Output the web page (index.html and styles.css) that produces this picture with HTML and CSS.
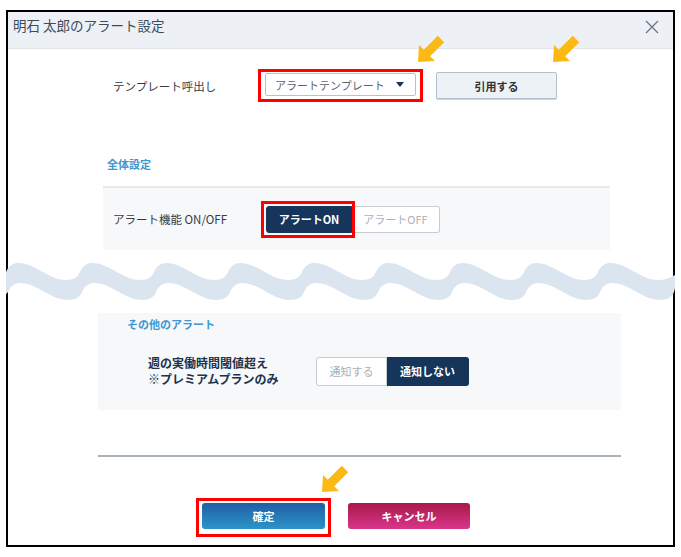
FILE: index.html
```html
<!DOCTYPE html>
<html lang="ja">
<head>
    <meta charset="UTF-8">
    <meta name="viewport" content="width=device-width, initial-scale=1.0">
    <title>明石 太郎のアラート設定</title>
    <link rel="stylesheet" href="styles.css">
</head>
<body>
    <div class="dialog">
        <div class="dialog-header">
            <span class="dialog-title">明石 太郎のアラート設定</span>
            <svg class="close" width="14" height="14" viewBox="0 0 14 14">
                <path d="M1 1 L13 13 M13 1 L1 13" stroke="#6d7b88" stroke-width="1.4" fill="none"/>
            </svg>
        </div>

        <div class="template-row">
            <span class="row-label">テンプレート呼出し</span>
            <div class="marker marker-select">
                <div class="select">アラートテンプレート<span class="caret"></span></div>
            </div>
            <button class="btn-quote">引用する</button>
        </div>

        <h2 class="section-title section-all">全体設定</h2>
        <div class="panel panel-all">
            <span class="row-label label-wide">アラート機能 ON/OFF</span>
            <button class="toggle toggle-left is-active is-marked">アラートON</button>
            <button class="toggle toggle-right toggle-off">アラートOFF</button>
        </div>

        <div class="panel panel-other">
            <h2 class="section-title">その他のアラート</h2>
            <div class="other-row">
                <div class="other-label">週の実働時間閾値超え<br>※プレミアムプランのみ</div>
                <button class="toggle toggle-left toggle-notify">通知する</button>
                <button class="toggle toggle-right is-active toggle-silent">通知しない</button>
            </div>
        </div>

        <hr class="divider">

        <div class="actions">
            <div class="marker marker-ok">
                <button class="btn-ok">確定</button>
            </div>
            <button class="btn-cancel">キャンセル</button>
        </div>

        <!-- cut mark between the two screenshots -->
        <svg class="wave" width="681" height="46" viewBox="0 0 681 46">
            <path fill="#dbe5f0" d="M6 14
                c2 -5 6 -9 12 -9 c18 0 30 17 48 17 c8 0 12 -3 14 -8
                c2 -5 6 -9 12 -9 c18 0 30 17 48 17 c8 0 12 -3 14 -8
                c2 -5 6 -9 12 -9 c18 0 30 17 48 17 c8 0 12 -3 14 -8
                c2 -5 6 -9 12 -9 c18 0 30 17 48 17 c8 0 12 -3 14 -8
                c2 -5 6 -9 12 -9 c18 0 30 17 48 17 c8 0 12 -3 14 -8
                c2 -5 6 -9 12 -9 c18 0 30 17 48 17 c8 0 12 -3 14 -8
                c2 -5 6 -9 12 -9 c18 0 30 17 48 17 c8 0 12 -3 14 -8
                c2 -5 6 -9 12 -9 c18 0 30 17 48 17 c8 0 12 -3 14 -8
                c2 -5 6 -9 12 -9 c18 0 30 17 48 17 c8 0 14 -2 21 -8
                L674 34
                c-2 5 -6 8 -14 8 c-18 0 -30 -17 -48 -17 c-6 0 -10 4 -12 9
                c-2 5 -6 8 -14 8 c-18 0 -30 -17 -48 -17 c-6 0 -10 4 -12 9
                c-2 5 -6 8 -14 8 c-18 0 -30 -17 -48 -17 c-6 0 -10 4 -12 9
                c-2 5 -6 8 -14 8 c-18 0 -30 -17 -48 -17 c-6 0 -10 4 -12 9
                c-2 5 -6 8 -14 8 c-18 0 -30 -17 -48 -17 c-6 0 -10 4 -12 9
                c-2 5 -6 8 -14 8 c-18 0 -30 -17 -48 -17 c-6 0 -10 4 -12 9
                c-2 5 -6 8 -14 8 c-18 0 -30 -17 -48 -17 c-6 0 -10 4 -12 9
                c-2 5 -6 8 -14 8 c-18 0 -30 -17 -48 -17 c-6 0 -10 4 -12 9
                c-2 5 -6 8 -14 8 c-18 0 -30 -17 -48 -17 c-6 0 -10 4 -12 9
                L1 42 Z"/>
        </svg>

        <svg class="pointer pointer-select" width="28" height="28" viewBox="0 0 28 28">
            <polygon fill="#fdb913" points="1,27 2,10 6.8,14.8 20.8,0.8 27.2,7.2 13.2,21.2 18,26"/>
        </svg>
        <svg class="pointer pointer-quote" width="28" height="28" viewBox="0 0 28 28">
            <polygon fill="#fdb913" points="1,27 2,10 6.8,14.8 20.8,0.8 27.2,7.2 13.2,21.2 18,26"/>
        </svg>
        <svg class="pointer pointer-ok" width="28" height="28" viewBox="0 0 28 28">
            <polygon fill="#fdb913" points="1,27 2,10 6.8,14.8 20.8,0.8 27.2,7.2 13.2,21.2 18,26"/>
        </svg>
    </div>
</body>
</html>
```

FILE: styles.css
```css
body {
    margin: 10px 6px;
    background-color: #fff;
    font-family: "Noto Sans CJK JP", "Noto Sans", sans-serif;
    color: #333c46;
}

button {
    font-family: inherit;
    cursor: pointer;
    padding: 0;
}

.dialog {
    position: relative;
    width: 665px;
    height: 533px;
    border: 2px solid #000;
}

.dialog-header {
    display: flex;
    justify-content: space-between;
    align-items: flex-start;
    padding: 3px 14px 0 5px;
    box-sizing: border-box;
    height: 37px;
    background-color: #edf1f5;
    border-bottom: 1px solid #dfe5ea;
}

.dialog-title {
    font-size: 13.5px;
    line-height: 20px;
    color: #3b4b5b;
}

.close {
    margin-top: 5px;
}

.row-label {
    font-size: 11.5px;
    color: #333c46;
}

/* template row */
.template-row {
    display: flex;
    align-items: center;
    height: 33px;
    margin-top: 20px;
    padding-left: 105px;
}

.template-row .row-label {
    width: 145px;
}

.marker {
    border: 3px solid #f00;
}

.marker-select {
    padding: 1px 4px 3px;
}

.select {
    display: flex;
    align-items: center;
    justify-content: space-between;
    width: 151px;
    height: 23px;
    box-sizing: border-box;
    padding: 0 11px 0 9px;
    border: 1px solid #b7c2cc;
    border-radius: 2px;
    font-size: 11px;
    color: #5b6570;
}

.caret {
    width: 0;
    height: 0;
    border-top: 5px solid #1c3453;
    border-left: 4px solid transparent;
    border-right: 4px solid transparent;
}

.btn-quote {
    width: 121px;
    height: 27px;
    margin-left: 13px;
    background-color: #edf2f6;
    border: 1px solid #b3c0cb;
    border-radius: 2px;
    box-shadow: 0 1px 0 #cbd4dc;
    font-size: 11px;
    font-weight: bold;
    color: #333;
}

/* sections */
.section-title {
    margin: 0;
    font-size: 11px;
    line-height: 14px;
    font-weight: bold;
    color: #3e97d1;
}

.section-all {
    margin: 55px 0 15px 99px;
}

.panel {
    background-color: #f6f8fa;
}

.panel-all {
    display: flex;
    align-items: center;
    width: 507px;
    height: 64px;
    box-sizing: border-box;
    margin-left: 95px;
    padding-left: 10px;
    border-top: 2px solid #e6ebf0;
}

.label-wide {
    width: 153px;
}

.toggle {
    height: 27px;
    font-size: 11px;
    border: 1px solid #c6ccd2;
    background-color: #fff;
    color: #a9b0b7;
}

.toggle-left {
    border-radius: 3px 0 0 3px;
}

.toggle-right {
    border-radius: 0 3px 3px 0;
    border-left: none;
}

.toggle.is-active {
    background-color: #15355a;
    border-color: #15355a;
    color: #fff;
    font-weight: bold;
}

.is-marked {
    position: relative;
    z-index: 1;
}

.is-marked::after {
    content: "";
    position: absolute;
    inset: -6px -4px -6px -6px;
    border: 3px solid #f00;
}

.panel-all .toggle-left {
    width: 86px;
}

.panel-all .toggle-off {
    width: 88px;
}

.panel-other {
    width: 523px;
    height: 97px;
    box-sizing: border-box;
    margin: 63px 0 0 90px;
    padding: 4px 0 0 29px;
}

.other-row {
    display: flex;
    align-items: center;
    margin: 24px 0 0 21px;
}

.other-label {
    width: 168px;
    font-size: 12px;
    line-height: 16px;
    font-weight: bold;
    color: #22324a;
}

.toggle-notify {
    width: 71px;
    height: 29px;
}

.toggle-silent {
    width: 82px;
    height: 29px;
}

.divider {
    width: 523px;
    height: 2px;
    margin: 45px 0 0 90px;
    border: none;
    background-color: #a8b3bc;
}

/* footer buttons */
.actions {
    display: flex;
    align-items: flex-start;
    margin-top: 41px;
    padding-left: 188px;
}

.marker-ok {
    padding: 2px 3px 5px;
}

.btn-ok,
.btn-cancel {
    height: 26px;
    border: none;
    border-radius: 3px;
    font-size: 11px;
    font-weight: bold;
    color: #fff;
}

.btn-ok {
    display: block;
    width: 123px;
    background: linear-gradient(#1f5fa4, #2c94c9);
}

.btn-cancel {
    width: 122px;
    margin: 5px 0 0 17px;
    background: linear-gradient(#a81a4a, #d9358b);
}

/* overlays */
.wave {
    position: absolute;
    left: -8px;
    top: 246px;
}

.pointer {
    position: absolute;
}

.pointer-select {
    left: 409px;
    top: 23px;
}

.pointer-quote {
    left: 544px;
    top: 23px;
}

.pointer-ok {
    left: 313px;
    top: 453px;
}
```
